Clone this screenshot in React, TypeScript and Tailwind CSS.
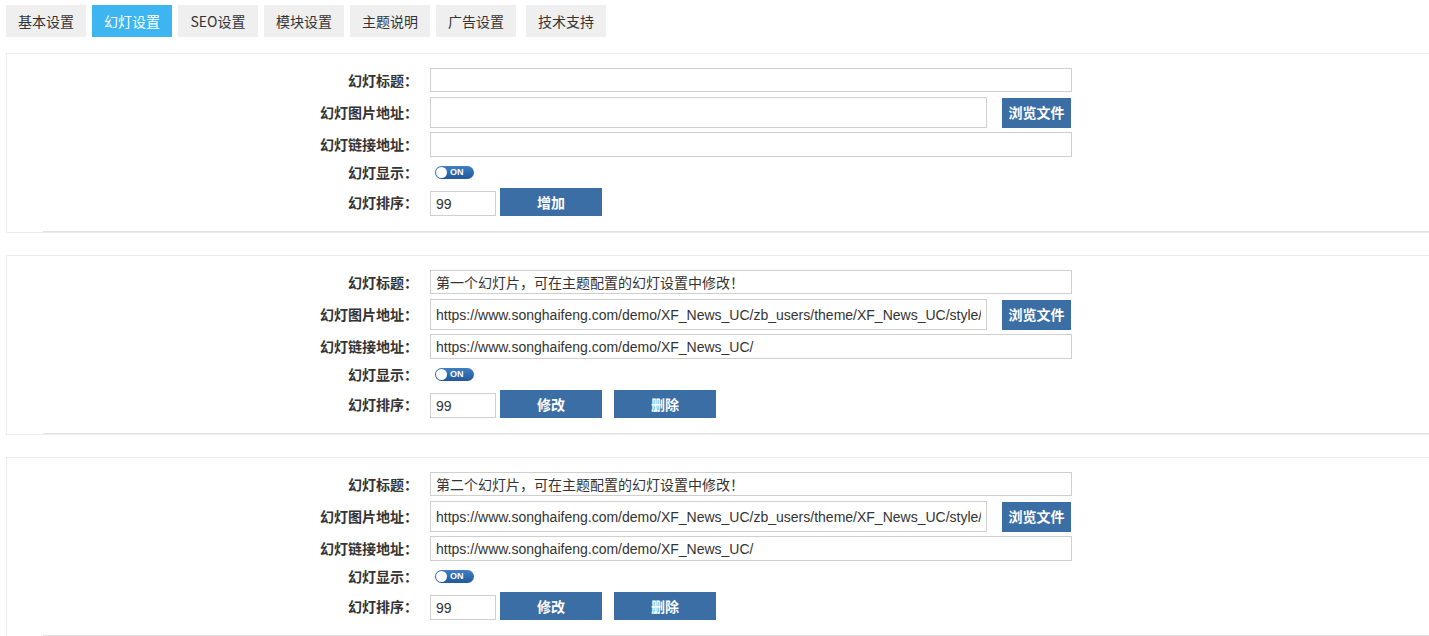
import React from 'react';

// Theme config page: slide (幻灯) settings tab.
const TABS = ['基本设置', '幻灯设置', 'SEO设置', '模块设置', '主题说明', '广告设置', '技术支持'];

type Slide = { title: string; img: string; link: string; order: string; isNew?: boolean };

const SLIDES: Slide[] = [
  { title: '', img: '', link: '', order: '99', isNew: true },
  {
    title: '第一个幻灯片，可在主题配置的幻灯设置中修改！',
    img: 'https://www.songhaifeng.com/demo/XF_News_UC/zb_users/theme/XF_News_UC/style/images/slide1.jpg',
    link: 'https://www.songhaifeng.com/demo/XF_News_UC/',
    order: '99',
  },
  {
    title: '第二个幻灯片，可在主题配置的幻灯设置中修改！',
    img: 'https://www.songhaifeng.com/demo/XF_News_UC/zb_users/theme/XF_News_UC/style/images/slide2.jpg',
    link: 'https://www.songhaifeng.com/demo/XF_News_UC/',
    order: '99',
  },
];

const FONT = { fontFamily: '"Microsoft YaHei", "Noto Sans CJK SC", sans-serif' };
const inputCls =
  'border border-[#cfcfcf] bg-white px-[5px] text-[14px] text-[#333] outline-none font-["Liberation_Sans","Noto_Sans_CJK_SC",sans-serif]';
const btnCls = 'bg-[#3b6ea5] text-white text-[14px] font-bold flex items-center justify-center';

function Label({ children }: { children: React.ReactNode }) {
  return <div className="w-[411px] shrink-0 text-right text-[14px] font-bold text-[#333]">{children}</div>;
}

function Toggle() {
  return (
    <div className="ml-[5px] flex h-[13px] w-[39px] items-center rounded-full bg-gradient-to-b from-[#3f7fc4] to-[#24589a] px-[1px]">
      <div className="h-[11px] w-[11px] rounded-full bg-white" />
      <span className="ml-[3px] text-[9px] font-bold leading-none text-white font-['Liberation_Sans',sans-serif]">ON</span>
    </div>
  );
}

function SlidePanel({ s }: { s: Slide }) {
  return (
    <div className="ml-[6px] border-l border-t border-b border-[#ececec] pt-[14px]">
      <div className="flex h-[24px] items-center">
        <Label>幻灯标题：</Label>
        <input readOnly value={s.title} className={`${inputCls} ml-[12px] h-[24px] w-[642px]`} />
      </div>
      <div className="mt-[5px] flex h-[31px] items-center">
        <Label>幻灯图片地址：</Label>
        <input readOnly value={s.img} className={`${inputCls} ml-[12px] h-[31px] w-[557px]`} />
        <button className={`${btnCls} ml-[15px] h-[30px] w-[69px]`}>浏览文件</button>
      </div>
      <div className="mt-[4px] flex h-[25px] items-center">
        <Label>幻灯链接地址：</Label>
        <input readOnly value={s.link} className={`${inputCls} ml-[12px] h-[25px] w-[642px]`} />
      </div>
      <div className="flex h-[31px] items-center">
        <Label>幻灯显示：</Label>
        <div className="ml-[12px]">
          <Toggle />
        </div>
      </div>
      <div className="flex h-[28px] items-end">
        <div className="self-center">
          <Label>幻灯排序：</Label>
        </div>
        <input readOnly value={s.order} className={`${inputCls} ml-[12px] h-[25px] w-[66px]`} />
        <button className={`${btnCls} ml-[4px] h-[28px] w-[102px]`}>{s.isNew ? '增加' : '修改'}</button>
        {!s.isNew && <button className={`${btnCls} ml-[12px] h-[28px] w-[102px]`}>删除</button>}
      </div>
      <div className="mt-[15px] ml-[36px] h-px bg-[#e2e2e2]" />
    </div>
  );
}

export default function App() {
  return (
    <div className="h-[636px] w-[1429px] overflow-hidden bg-white" style={FONT}>
      <div className="flex pl-[6px] pt-[5px]">
        {TABS.map((t, i) => (
          <div
            key={t}
            className={`flex h-[32px] w-[80px] items-center justify-center text-[14px] ${
              i === 1 ? 'bg-[#3db5f0] text-white' : 'bg-[#efefef] text-[#333]'
            } ${i === 0 ? '' : i === 6 ? 'ml-[10px]' : 'ml-[6px]'}`}
          >
            {t}
          </div>
        ))}
      </div>
      <div className="mt-[16px] flex flex-col gap-[22px]">
        {SLIDES.map((s, i) => (
          <SlidePanel key={i} s={s} />
        ))}
      </div>
    </div>
  );
}
